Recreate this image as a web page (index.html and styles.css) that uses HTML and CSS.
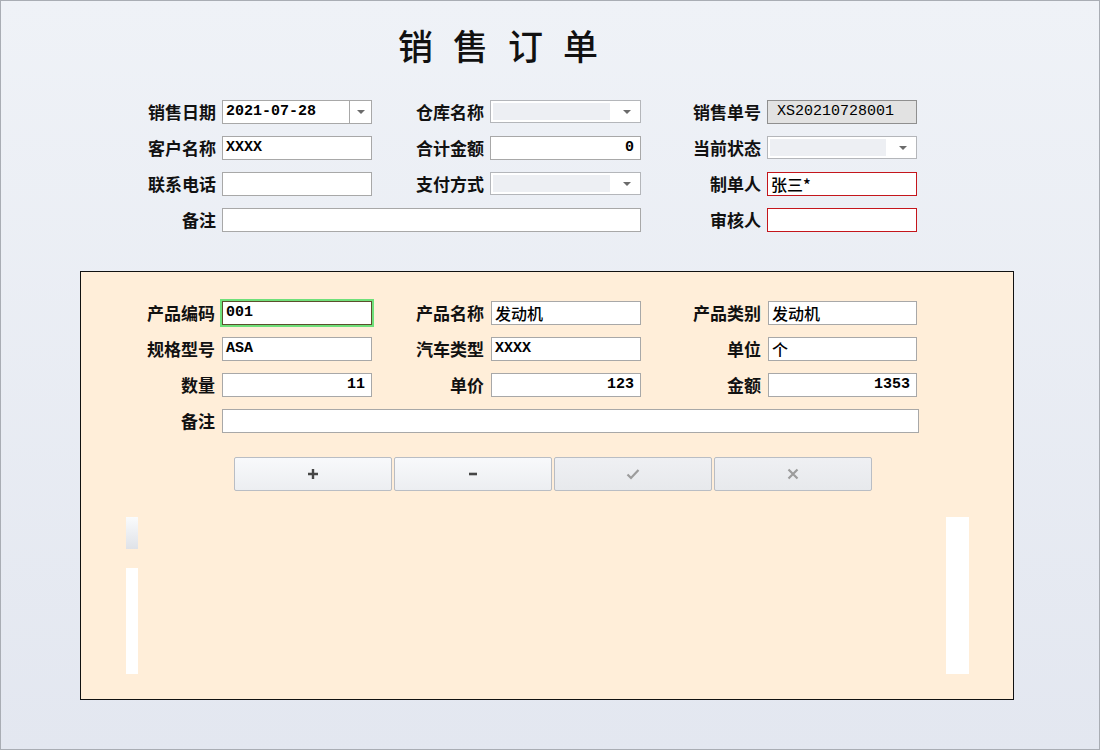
FILE: index.html
```html
<!DOCTYPE html>
<html lang="zh-CN">
<head>
    <meta charset="UTF-8">
    <title>销售订单</title>
    <link rel="stylesheet" href="styles.css">
</head>
<body>

    <div class="form-title">销售订单</div>

    <!-- 单据头 -->
    <div class="head-form">
        <label class="field-label">销售日期</label>
        <div class="date-box">
            <span class="box-text">2021-07-28</span>
            <span class="drop-btn"><i class="arrow"></i></span>
        </div>
        <label class="field-label">仓库名称</label>
        <div class="combo-box"><span class="combo-fill"></span><i class="arrow"></i></div>
        <label class="field-label">销售单号</label>
        <div class="text-box readonly center">XS20210728001</div>

        <label class="field-label">客户名称</label>
        <div class="text-box">XXXX</div>
        <label class="field-label">合计金额</label>
        <div class="text-box num">0</div>
        <label class="field-label">当前状态</label>
        <div class="combo-box"><span class="combo-fill"></span><i class="arrow"></i></div>

        <label class="field-label">联系电话</label>
        <div class="text-box"></div>
        <label class="field-label">支付方式</label>
        <div class="combo-box"><span class="combo-fill"></span><i class="arrow"></i></div>
        <label class="field-label">制单人</label>
        <div class="text-box required cn">张三*</div>

        <label class="field-label">备注</label>
        <div class="text-box span-3"></div>
        <label class="field-label">审核人</label>
        <div class="text-box required"></div>
    </div>

    <!-- 明细 -->
    <div class="detail-panel">
        <div class="detail-form">
            <label class="field-label">产品编码</label>
            <div class="text-box focused">001</div>
            <label class="field-label">产品名称</label>
            <div class="text-box cn">发动机</div>
            <label class="field-label">产品类别</label>
            <div class="text-box cn">发动机</div>

            <label class="field-label">规格型号</label>
            <div class="text-box">ASA</div>
            <label class="field-label">汽车类型</label>
            <div class="text-box">XXXX</div>
            <label class="field-label">单位</label>
            <div class="text-box cn">个</div>

            <label class="field-label">数量</label>
            <div class="text-box num">11</div>
            <label class="field-label">单价</label>
            <div class="text-box num">123</div>
            <label class="field-label">金额</label>
            <div class="text-box num">1353</div>

            <label class="field-label">备注</label>
            <div class="text-box span-5 wide"></div>
        </div>

        <div class="tool-bar">
            <button class="tool-btn">
                <svg viewBox="0 0 12 12" width="12" height="12"><path d="M6 1v10M1 6h10" stroke="currentColor" stroke-width="2.4"/></svg>
            </button>
            <button class="tool-btn">
                <svg viewBox="0 0 12 12" width="12" height="12"><path d="M2 6h8" stroke="currentColor" stroke-width="2.6"/></svg>
            </button>
            <button class="tool-btn disabled">
                <svg viewBox="0 0 14 12" width="14" height="12"><path d="M1.5 6.5l3.5 3.5 7.5-8" fill="none" stroke="currentColor" stroke-width="2.2"/></svg>
            </button>
            <button class="tool-btn disabled">
                <svg viewBox="0 0 12 12" width="12" height="12"><path d="M1.5 1.5l9 9M10.5 1.5l-9 9" stroke="currentColor" stroke-width="2.2"/></svg>
            </button>
        </div>

        <div class="grid-area">
            <div class="left-bars">
                <div class="bar-thumb"></div>
                <div class="bar-white"></div>
            </div>
            <div class="right-bar"></div>
        </div>
    </div>

</body>
</html>
```

FILE: styles.css
```css
html, body {
    margin: 0;
    padding: 0;
}

body {
    width: 1100px;
    height: 750px;
    box-sizing: border-box;
    border: 1px solid #a9adb4;
    background: linear-gradient(to bottom, #eff2f7, #e3e7f0);
    font-family: "Noto Sans CJK SC", sans-serif;
    color: #000;
    overflow: hidden;
}

/* 标题 */
.form-title {
    margin: 24px 0 0 397px;
    height: 40px;
    line-height: 40px;
    font-size: 35px;
    font-weight: 500;
    letter-spacing: 20px;
    color: #111;
}

.field-label {
    font-size: 17px;
    font-weight: bold;
    line-height: 24px;
    text-align: right;
    white-space: nowrap;
    color: #111;
}

/* 单据头表格 */
.head-form {
    display: grid;
    grid-template-columns: 86px 150px 106px 151px 114px 150px;
    grid-auto-rows: 24px;
    column-gap: 6px;
    row-gap: 12px;
    margin: 35px 0 0 129px;
}

.text-box {
    box-sizing: border-box;
    height: 24px;
    background: #fff;
    border: 1px solid #a8a8a8;
    padding: 0 3px;
    font-family: "Liberation Mono", monospace;
    font-size: 15px;
    font-weight: bold;
    line-height: 22px;
    white-space: nowrap;
    overflow: hidden;
}

.text-box.num {
    text-align: right;
    padding-right: 6px;
}

.text-box.center {
    padding-left: 9px;
    font-weight: normal;
}

.text-box.cn {
    font-family: "Noto Sans CJK SC", sans-serif;
    font-size: 16px;
    font-weight: 500;
}

.text-box.readonly {
    background: #e2e2e2;
    border-color: #8f8f8f;
}

.text-box.required {
    border-color: #c4161c;
}

.text-box.focused {
    border: 1px solid #5b4f2c;
    box-shadow: 0 0 0 2px #6fe07a;
}

.span-3 {
    grid-column: span 3;
}

.span-5 {
    grid-column: span 5;
}

.wide {
    margin-right: -2px;
}

.date-box,
.combo-box {
    box-sizing: border-box;
    height: 24px;
    background: #fff;
    border: 1px solid #a8a8a8;
    display: flex;
    align-items: center;
}

.date-box .box-text {
    flex: 1;
    padding-left: 3px;
    font-family: "Liberation Mono", monospace;
    font-size: 15px;
    font-weight: bold;
    line-height: 22px;
}

.drop-btn {
    width: 21px;
    height: 22px;
    border-left: 1px solid #a8a8a8;
    display: flex;
    align-items: center;
    justify-content: center;
}

.combo-box {
    height: 23px;
    border-color: #b4b6ba;
    padding: 2px;
}

.combo-fill {
    flex: 1;
    align-self: stretch;
    background: #edeff3;
}

.combo-box .arrow {
    margin: 0 7px 0 13px;
}

.arrow {
    width: 0;
    height: 0;
    border-left: 4px solid transparent;
    border-right: 4px solid transparent;
    border-top: 4px solid #6b6b6b;
}

/* 明细区域 */
.detail-panel {
    margin: 39px 0 0 79px;
    width: 934px;
    box-sizing: border-box;
    border: 1px solid #111;
    background: #ffeed9;
    padding: 29px 0 25px 0;
}

.detail-form {
    display: grid;
    grid-template-columns: 84px 150px 105px 150px 113px 149px;
    grid-auto-rows: 24px;
    column-gap: 7px;
    row-gap: 12px;
    margin-left: 50px;
}

.tool-bar {
    display: flex;
    gap: 2px;
    margin: 24px 0 0 153px;
}

.tool-btn {
    width: 158px;
    height: 34px;
    border: 1px solid #b9bdc4;
    border-radius: 2px;
    background: linear-gradient(to bottom, #f8f9fb, #eceef1);
    color: #464646;
    padding: 0;
    display: flex;
    align-items: center;
    justify-content: center;
}

.tool-btn.disabled {
    background: linear-gradient(to bottom, #eff0f3, #e7e9ec);
    color: #9c9c9c;
}

.grid-area {
    display: flex;
    justify-content: space-between;
    height: 157px;
    margin-top: 26px;
    padding: 0 44px 0 45px;
}

.left-bars {
    display: flex;
    flex-direction: column;
    width: 12px;
    gap: 19px;
}

.bar-thumb {
    height: 32px;
    background: linear-gradient(to bottom, #fafbfc, #dfe2e8);
}

.bar-white {
    flex: 1;
    background: #fff;
}

.right-bar {
    width: 23px;
    background: #fff;
}
```
